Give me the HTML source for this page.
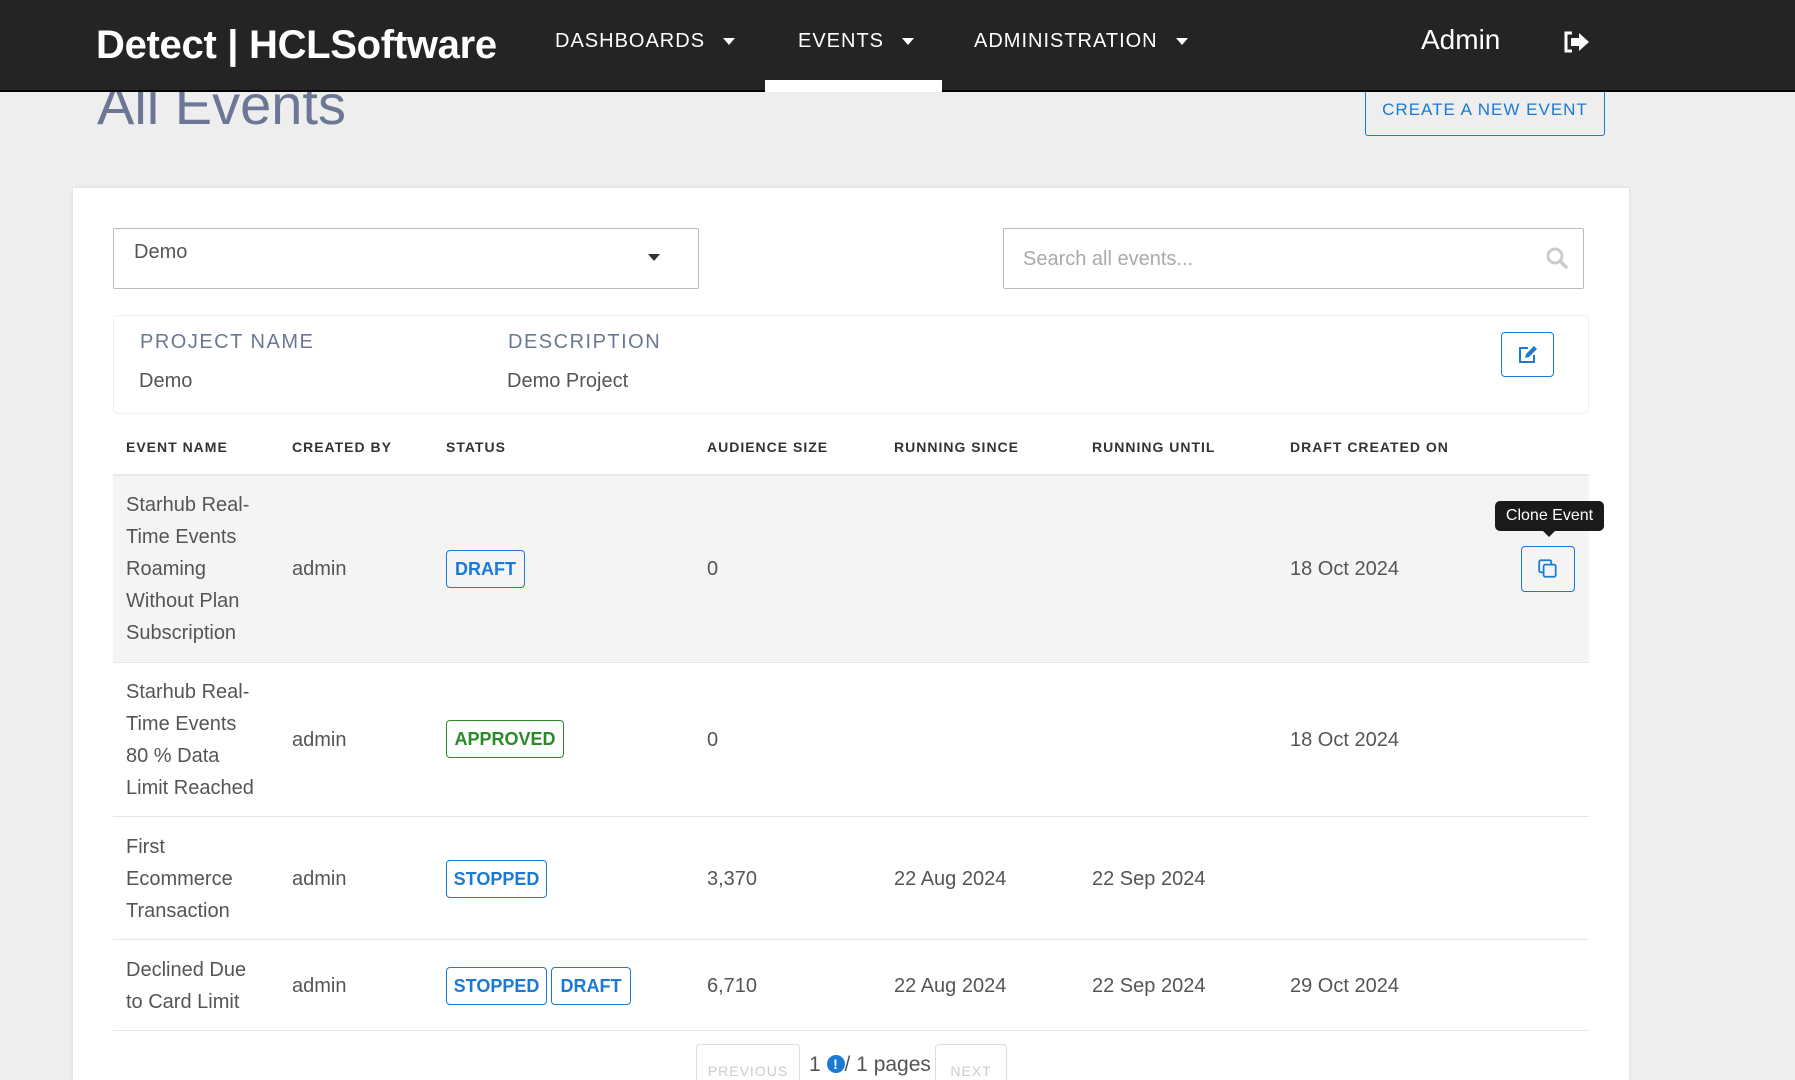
<!DOCTYPE html>
<html><head><meta charset="utf-8"><style>
*{margin:0;padding:0;box-sizing:border-box}
html,body{width:1795px;height:1080px;overflow:hidden}
body{background:#eeeeee;font-family:"Liberation Sans",sans-serif;color:#444;position:relative}
.a{position:absolute;white-space:nowrap}
.nav{position:absolute;left:0;top:0;width:1795px;height:92px;background:#242424;border-bottom:2px solid #000}
.nv{color:#fff;font-size:20px;letter-spacing:1px;top:30px}
.car{display:inline-block;width:0;height:0;border-left:6px solid transparent;border-right:6px solid transparent;border-top:7px solid #fff;margin-left:18px;vertical-align:middle}
.card{position:absolute;left:73px;top:188px;width:1556px;height:892px;background:#fff;box-shadow:0 0 3px rgba(0,0,0,.1)}
.hd{font-size:14px;letter-spacing:1px;color:#333;top:439px;font-weight:bold}
.c{font-size:20px;color:#555;line-height:32px}
.badge{position:absolute;border:1.5px solid #1a7ad4;border-radius:4px;color:#1a7ad4;font-weight:bold;font-size:18px;text-align:center;line-height:37px;height:38px}
.row{position:absolute;left:113px;width:1476px;border-bottom:1px solid #e6e6e6}
</style></head><body>
<div class="a" style="left:97px;top:72px;font-size:56px;color:#6b7794">All Events</div>
<div class="a" style="left:1365px;top:92px;width:240px;height:44px;border:1.5px solid #1a7ad4;border-top:none;color:#1a7ad4;font-size:17px;letter-spacing:1px;text-align:center;line-height:36px;border-radius:0 0 3px 3px">CREATE A NEW EVENT</div>
<div class="nav">
<div class="a" style="left:96px;top:23px;color:#fff;font-size:40px;font-weight:bold;letter-spacing:-0.3px">Detect | HCLSoftware</div>
<div class="a nv" style="left:555px">DASHBOARDS<span class="car"></span></div>
<div class="a nv" style="left:798px">EVENTS<span class="car"></span></div>
<div class="a" style="left:765px;top:80px;width:177px;height:12px;background:#fff"></div>
<div class="a nv" style="left:974px">ADMINISTRATION<span class="car"></span></div>
<div class="a" style="left:1421px;top:24px;color:#fff;font-size:28px">Admin</div>
<svg class="a" style="left:1562px;top:30px" width="30" height="24" viewBox="0 0 30 24"><path d="M10 3H4v18h6" fill="none" stroke="#fff" stroke-width="3"/><path d="M9 8h8V3l10 9-10 9v-5H9z" fill="#fff"/></svg>
</div>
<div class="card"></div>
<div class="a" style="left:113px;top:228px;width:586px;height:61px;border:1px solid #bbb;border-radius:2px"></div>
<div class="a" style="left:134px;top:241px;font-size:20px;color:#555">Demo</div>
<div class="a" style="left:648px;top:254px;border-left:6px solid transparent;border-right:6px solid transparent;border-top:7px solid #333"></div>
<div class="a" style="left:1003px;top:228px;width:581px;height:61px;border:1px solid #bbb;border-radius:2px"></div>
<div class="a" style="left:1023px;top:248px;font-size:20px;color:#aaa">Search all events...</div>
<svg class="a" style="left:1545px;top:246px" width="24" height="24" viewBox="0 0 24 24"><circle cx="10" cy="10" r="7" fill="none" stroke="#ccc" stroke-width="3"/><path d="M15 15l6 6" stroke="#ccc" stroke-width="3.5" stroke-linecap="round"/></svg>
<div class="a" style="left:113px;top:315px;width:1476px;height:99px;border:1px solid #eee;border-radius:5px"></div>
<div class="a" style="left:140px;top:331px;font-size:20px;letter-spacing:1.5px;color:#6b7794">PROJECT NAME</div>
<div class="a" style="left:508px;top:331px;font-size:20px;letter-spacing:1.5px;color:#6b7794">DESCRIPTION</div>
<div class="a" style="left:139px;top:370px;font-size:20px;color:#555">Demo</div>
<div class="a" style="left:507px;top:370px;font-size:20px;color:#555">Demo Project</div>
<div class="a" style="left:1501px;top:332px;width:53px;height:45px;border:1.5px solid #1a7ad4;border-radius:4px"></div>
<svg class="a" style="left:1517px;top:345px" width="22" height="20" viewBox="0 0 22 20"><path d="M11 3H3v14h14v-7" fill="none" stroke="#1a7ad4" stroke-width="2"/><path d="M8 13l1-4 8-8 3 3-8 8z" fill="#1a7ad4"/></svg>
<div class="a hd" style="left:126px">EVENT NAME</div>
<div class="a hd" style="left:292px">CREATED BY</div>
<div class="a hd" style="left:446px">STATUS</div>
<div class="a hd" style="left:707px">AUDIENCE SIZE</div>
<div class="a hd" style="left:894px">RUNNING SINCE</div>
<div class="a hd" style="left:1092px">RUNNING UNTIL</div>
<div class="a hd" style="left:1290px">DRAFT CREATED ON</div>
<div class="row" style="top:474px;height:189px;background:#f4f4f4;border-top:2px solid #e8e8e8"></div>
<div class="row" style="top:663px;height:154px"></div>
<div class="row" style="top:817px;height:123px"></div>
<div class="row" style="top:940px;height:91px"></div>
<div class="a c" style="left:126px;top:489px">Starhub Real-<br>Time Events<br>Roaming<br>Without Plan<br>Subscription</div>
<div class="a c" style="left:292px;top:553px">admin</div>
<div class="badge" style="left:446px;top:550px;width:79px">DRAFT</div>
<div class="a c" style="left:707px;top:553px">0</div>
<div class="a c" style="left:1290px;top:553px">18 Oct 2024</div>
<div class="a" style="left:1495px;top:501px;width:109px;height:30px;background:#1a1a1a;border-radius:5px;color:#fff;font-size:16px;text-align:center;line-height:30px">Clone Event</div>
<div class="a" style="left:1543px;top:531px;border-left:6px solid transparent;border-right:6px solid transparent;border-top:6px solid #1a1a1a"></div>
<div class="a" style="left:1521px;top:546px;width:54px;height:46px;border:1.5px solid #1a7ad4;border-radius:4px"></div>
<svg class="a" style="left:1537px;top:558px" width="22" height="22" viewBox="0 0 20 20"><rect x="2" y="2" width="11" height="11" rx="1.5" fill="none" stroke="#1a7ad4" stroke-width="1.6"/><rect x="6" y="6" width="11" height="11" rx="1.5" fill="#f4f4f4" stroke="#1a7ad4" stroke-width="1.6"/></svg>
<div class="a c" style="left:126px;top:676px">Starhub Real-<br>Time Events<br>80 % Data<br>Limit Reached</div>
<div class="a c" style="left:292px;top:724px">admin</div>
<div class="badge" style="left:446px;top:720px;width:118px;border-color:#2a8a2a;color:#2a8a2a">APPROVED</div>
<div class="a c" style="left:707px;top:724px">0</div>
<div class="a c" style="left:1290px;top:724px">18 Oct 2024</div>
<div class="a c" style="left:126px;top:831px">First<br>Ecommerce<br>Transaction</div>
<div class="a c" style="left:292px;top:863px">admin</div>
<div class="badge" style="left:446px;top:860px;width:101px">STOPPED</div>
<div class="a c" style="left:707px;top:863px">3,370</div>
<div class="a c" style="left:894px;top:863px">22 Aug 2024</div>
<div class="a c" style="left:1092px;top:863px">22 Sep 2024</div>
<div class="a c" style="left:126px;top:954px">Declined Due<br>to Card Limit</div>
<div class="a c" style="left:292px;top:970px">admin</div>
<div class="badge" style="left:446px;top:967px;width:101px">STOPPED</div>
<div class="badge" style="left:551px;top:967px;width:80px">DRAFT</div>
<div class="a c" style="left:707px;top:970px">6,710</div>
<div class="a c" style="left:894px;top:970px">22 Aug 2024</div>
<div class="a c" style="left:1092px;top:970px">22 Sep 2024</div>
<div class="a c" style="left:1290px;top:970px">29 Oct 2024</div>
<div class="a" style="left:696px;top:1044px;width:104px;height:50px;border:1px solid #ddd;border-radius:4px;color:#ccc;font-size:14px;letter-spacing:1px;text-align:center;padding-top:18px">PREVIOUS</div>
<div class="a" style="left:809px;top:1053px;font-size:21px;color:#555">1 <span style="display:inline-block;width:18px;height:18px;border-radius:50%;background:#1a7ad4;color:#fff;font-size:14px;font-weight:bold;text-align:center;line-height:18px;vertical-align:2px">!</span>/ 1 pages</div>
<div class="a" style="left:935px;top:1044px;width:72px;height:50px;border:1px solid #ddd;border-radius:4px;color:#ccc;font-size:14px;letter-spacing:1px;text-align:center;padding-top:18px">NEXT</div>
</body></html>
